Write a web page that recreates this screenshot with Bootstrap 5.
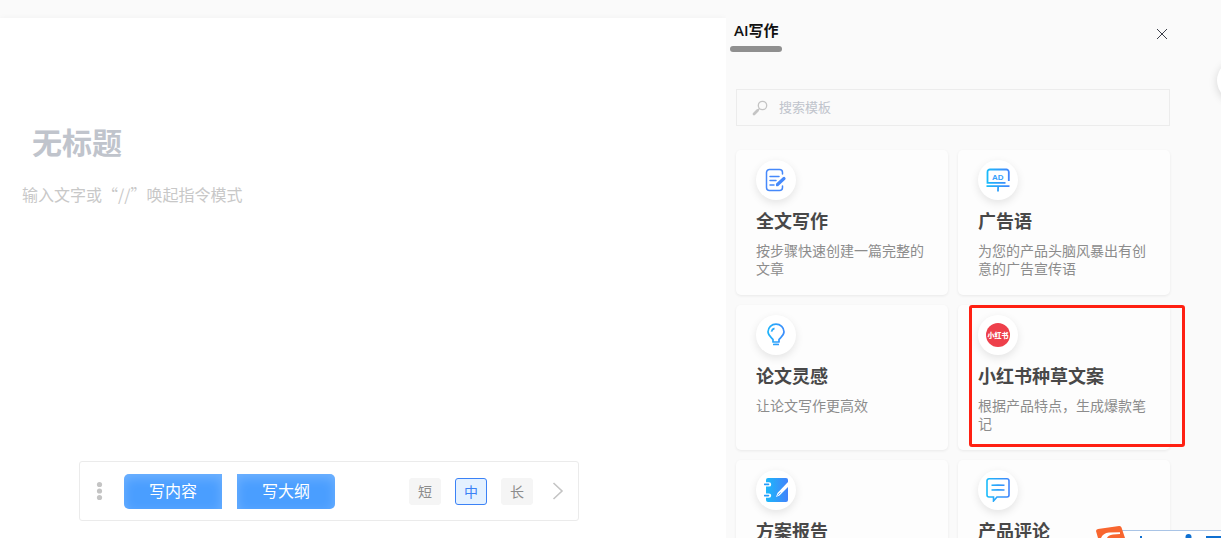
<!DOCTYPE html>
<html lang="zh-CN">
<head>
<meta charset="utf-8">
<meta name="viewport" content="width=device-width, initial-scale=1">
<title>AI写作</title>
<link href="https://cdn.jsdelivr.net/npm/bootstrap@5.3.0/dist/css/bootstrap.min.css" rel="stylesheet">
<style>
  body { background: #fafafa; font-family: "Open Sans", "Noto Sans CJK SC", sans-serif; }
  .workspace { padding-top: 18px; }
  .editor { min-width: 0; box-shadow: 0 0 6px rgba(0,0,0,.04); }
  .doc-title { margin: 96px 32px 0; width: auto; height: 54px; font: 700 30px/54px "Noto Sans CJK SC", sans-serif; }
  .doc-body { margin: 11px 22px 0; resize: none; font: 16px/30px "Noto Sans CJK SC", sans-serif; }
  .doc-title::placeholder { color: #c0c4cc; opacity: 1; }
  .doc-body::placeholder { color: #c8c8c8; opacity: 1; }
  .doc-title, .doc-body { outline: 0; }
  .write-bar { width: 500px; max-width: 100%; height: 60px; margin: 0 0 17px 79px; border: 1px solid #ebebeb; border-radius: 3px; padding: 0 13px 0 16px; }
  .write-btn { width: 98px; height: 35px; padding: 0; border: 0; background: #4a9eff; color: #fff; font-size: 16px; line-height: 35px; box-shadow: inset 0 4px 12px rgba(255,255,255,.22); }
  .write-btn:hover { background: #3a90f5; color: #fff; }
  .write-first { border-radius: 5px 0 0 5px; margin-left: 21px; }
  .write-second { border-radius: 0 5px 5px 0; margin-left: 15px; }
  .sizes { gap: 14px; margin-right: 18px; }
  .size-chip { width: 32px; height: 27px; padding: 0; border: 1px solid #f5f5f5; border-radius: 3px; background: #f5f5f5; color: #8c8c8c; font-size: 14px; line-height: 26px; }
  .btn-check:checked + .size-chip { border-color: #3b82f6; background: #e4f1ff; color: #3b82f6; }
  .side { flex: 0 0 495px; padding: 0 51px 0 10px; margin-top: -18px; z-index: 1; background: #fafafa; }
  .side-head { height: 52px; margin-left: -6px; }
  .tab-name { width: 52px; padding: 19px 0 0 4px; color: #111; font: 600 15px/22px "Open Sans", "Noto Sans CJK SC", sans-serif; white-space: nowrap; }
  .tab-name::after { content: ""; display: block; height: 6px; width: 52px; margin: 5px 0 0 -4px; border-radius: 3px; background: #8f8f8f; }
  .close-btn { margin: 26px 0 0; width: 16px; height: 16px; }
  .search { height: 37px; margin: 37px 0 24px; padding-left: 15px; border: 1px solid #ececec; }
  .search input { margin-left: 11px; outline: 0; font-size: 13px; }
  .search input::placeholder { color: #c0c4cc; opacity: 1; }
  .templates { grid-template-columns: 1fr 1fr; grid-auto-rows: 145px; gap: 10px; }
  .template { padding: 10px 20px; border-radius: 5px; background: #fdfdfd; box-shadow: 0 1px 3px rgba(0,0,0,.07); color: #8c8c8c; }
  .disc { width: 40px; height: 40px; background: #fff; box-shadow: 0 3px 8px rgba(0,0,0,.1); }
  .template h2 { margin: 8px 0; color: #484848; font-size: 18px; font-weight: 700; line-height: 26px; }
  .template p { margin: 0; font-size: 14px; line-height: 18px; }
  .callout-box { top: 0; right: -15px; bottom: 3px; left: 11px; border: 3px solid #ff2012; border-radius: 3px; }
  .edge-knob { top: 60px; right: -37px; width: 41px; height: 41px; background: #fff; box-shadow: 0 2px 8px rgba(0,0,0,.15); }
  .ime { z-index: 5; }
</style>
</head>
<body class="vh-100 overflow-hidden position-relative">
<svg width="0" height="0" class="position-absolute" aria-hidden="true"><defs>
  <linearGradient id="blue" x1="0" x2="24" y1="0" y2="0" gradientUnits="userSpaceOnUse"><stop stop-color="#18bdfa"/><stop offset="1" stop-color="#4383fb"/></linearGradient>
</defs></svg>
<div class="workspace d-flex vh-100 overflow-hidden">
  <main class="editor d-flex flex-column flex-grow-1 bg-white">
    <input class="doc-title border-0 p-0 bg-transparent" type="text" placeholder="无标题" aria-label="标题">
    <textarea class="doc-body flex-grow-1 border-0 p-0 bg-transparent overflow-hidden" placeholder="输入文字或“//”唤起指令模式" aria-label="正文"></textarea>
    <div class="write-bar d-flex align-items-center bg-white">
      <svg width="7" height="20" fill="#c4c4c4" aria-hidden="true"><circle cx="3.5" cy="3.5" r="2.6"/><circle cx="3.5" cy="10" r="2.6"/><circle cx="3.5" cy="16.5" r="2.6"/></svg>
      <button class="btn write-btn write-first" type="button">写内容</button>
      <button class="btn write-btn write-second" type="button">写大纲</button>
      <div class="sizes d-flex ms-auto" role="group" aria-label="篇幅">
        <input class="btn-check" type="radio" name="size" id="size-s"><label class="btn size-chip" for="size-s">短</label>
        <input class="btn-check" type="radio" name="size" id="size-m" checked><label class="btn size-chip" for="size-m">中</label>
        <input class="btn-check" type="radio" name="size" id="size-l"><label class="btn size-chip" for="size-l">长</label>
      </div>
      <button class="btn p-0 border-0 d-flex" type="button" aria-label="下一步"><svg width="14" height="20" fill="none" stroke="#c4c4c4" stroke-width="1.6"><path d="M2.5 2 11 10l-8.500 8"/></svg></button>
    </div>
  </main>
  <aside class="side position-relative">
    <header class="side-head d-flex justify-content-between align-items-start">
      <h1 class="tab-name m-0">AI写作</h1>
      <button class="close-btn btn p-0 border-0 d-flex" type="button" aria-label="关闭"><svg width="16" height="16" fill="none" stroke="#3c3f4a" stroke-width="1"><path d="m3 3 10 10M13 3 3 13"/></svg></button>
    </header>
    <div class="search d-flex align-items-center">
      <svg width="16" height="16" fill="none" stroke="#c4c4c4" aria-hidden="true"><circle cx="10.500" cy="5.500" r="4.200" stroke-width="1.300"/><path d="m7.500 8.500-2 2" stroke-width="1.300"/><path d="M5.500 10.500 2 14" stroke-width="2.800" stroke-linecap="round"/></svg>
      <input class="border-0 p-0 flex-grow-1 bg-transparent" type="search" placeholder="搜索模板" aria-label="搜索模板">
    </div>
    <div class="templates d-grid">
      <article class="template">
        <div class="disc rounded-circle d-flex align-items-center justify-content-center"><svg width="24" height="24" fill="none" stroke="#4689fb" stroke-linecap="round"><path d="M18.500 6V4.500a3 3 0 0 0-3-3H5.500a3 3 0 0 0-3 3v15a3 3 0 0 0 3 3h10a3 3 0 0 0 3-3V18" stroke-width="1.500"/><path d="M6 8.500h9M6 12.500h6M6 17h4" stroke-width="1.500"/><path d="m20 10.500-6.500 6" stroke-width="3.200"/><path d="m13.500 16-.8 1.500" stroke-width="1.500"/></svg></div>
        <h2>全文写作</h2><p>按步骤快速创建一篇完整的文章</p>
      </article>
      <article class="template">
        <div class="disc rounded-circle d-flex align-items-center justify-content-center"><svg width="24" height="24" fill="none" stroke="url(#blue)" stroke-width="1.800"><path d="M19.500 14.800H1.500V4a2.500 2.500 0 0 1 2.500-2.500h16A2.500 2.500 0 0 1 22.800 4v9M.5 18.200Q12 18 23.500 18.200M12.200 18Q12 21 12 23.500"/><text x="6" y="11.500" font-family="Liberation Sans" font-size="8" font-weight="700" fill="#36a0fb" stroke="none">AD</text></svg></div>
        <h2>广告语</h2><p>为您的产品头脑风暴出有创意的广告宣传语</p>
      </article>
      <article class="template">
        <div class="disc rounded-circle d-flex align-items-center justify-content-center"><svg width="24" height="24" fill="none" stroke="url(#blue)" stroke-width="1.700" stroke-linejoin="round"><path d="M9 19v-2.500c-1.500-2-5-4-5-7.700a8 7.600 0 0 1 16 0c0 3.700-3.500 5.700-5 7.700V19ZM9 21.500Q12 21.300 15 21.500M7.500 8.700q.5-2.700 3-3.300"/></svg></div>
        <h2>论文灵感</h2><p>让论文写作更高效</p>
      </article>
      <article class="template position-relative">
        <div class="disc rounded-circle d-flex align-items-center justify-content-center"><svg width="24" height="24"><circle cx="12" cy="12" r="12" fill="#ee404b"/><text x="12" y="14.500" text-anchor="middle" font-family="Noto Sans CJK SC" font-size="7" font-weight="900" fill="#fff">小红书</text></svg></div>
        <h2>小红书种草文案</h2><p>根据产品特点，生成爆款笔记</p>
        <div class="callout-box position-absolute"></div>
      </article>
      <article class="template">
        <div class="disc rounded-circle d-flex align-items-center justify-content-center"><svg width="24" height="24"><path d="M4 0h18a2 2 0 0 1 2 2v20a2 2 0 0 1-2 2H4a2 2 0 0 1-2-2V2a2 2 0 0 1 2-2Z" fill="url(#blue)"/><path d="M0 4.200h5a2.200 2.200 0 0 1 0 4.400H0ZM0 15.400h5a2.200 2.200 0 0 1 0 4.400H0Z" fill="#fff"/><path d="M.5 6.400h4M.5 17.600h4" stroke="#259cfb" stroke-width="1.600" stroke-linecap="round"/><path d="m12 19 1.500-4L24 4v5L15.500 17.500Z" fill="#fff"/><path d="m13.500 17.500 3-3.200" stroke="#3990fb" stroke-width=".8"/></svg></div>
        <h2>方案报告</h2>
      </article>
      <article class="template">
        <div class="disc rounded-circle d-flex align-items-center justify-content-center"><svg width="24" height="24" fill="none" stroke="url(#blue)" stroke-width="1.600"><path d="M3 .8h18a2 2 0 0 1 2 2V17a2 2 0 0 1-2 2H11l-3.500 4V19H3a2 2 0 0 1-2-2V2.800a2 2 0 0 1 2-2Z"/><path d="M5.500 7.200Q12 7 18.500 7.200M5.500 12Q12 11.800 18.500 12"/></svg></div>
        <h2>产品评论</h2>
      </article>
    </div>
    <div class="edge-knob rounded-circle position-absolute"></div>
  </aside>
</div>
<svg class="ime position-fixed bottom-0 end-0" width="126" height="13" aria-hidden="true">
  <path d="M25 5.500H126V13H25Z" fill="#fff"/><path d="M25 5.500H126" stroke="#a9c4e6"/>
  <path d="M1 6Q1 4.500 3 4L24 1q2-.3 2.500 1.500L30 13H3Z" fill="#f8662f"/><path d="M6 13q2-5 8-5.500l11-.3v1.800l-7 .5q-5 .5-6 3.500Z" fill="#fff"/>
  <path d="M45 11h2v2h-2ZM111 11h15v2h-15Z" fill="#0f70d1"/><circle cx="93.500" cy="12" r="3" fill="#0f70d1"/>
</svg>
<script src="https://cdn.jsdelivr.net/npm/bootstrap@5.3.0/dist/js/bootstrap.bundle.min.js"></script>
</body>
</html>
